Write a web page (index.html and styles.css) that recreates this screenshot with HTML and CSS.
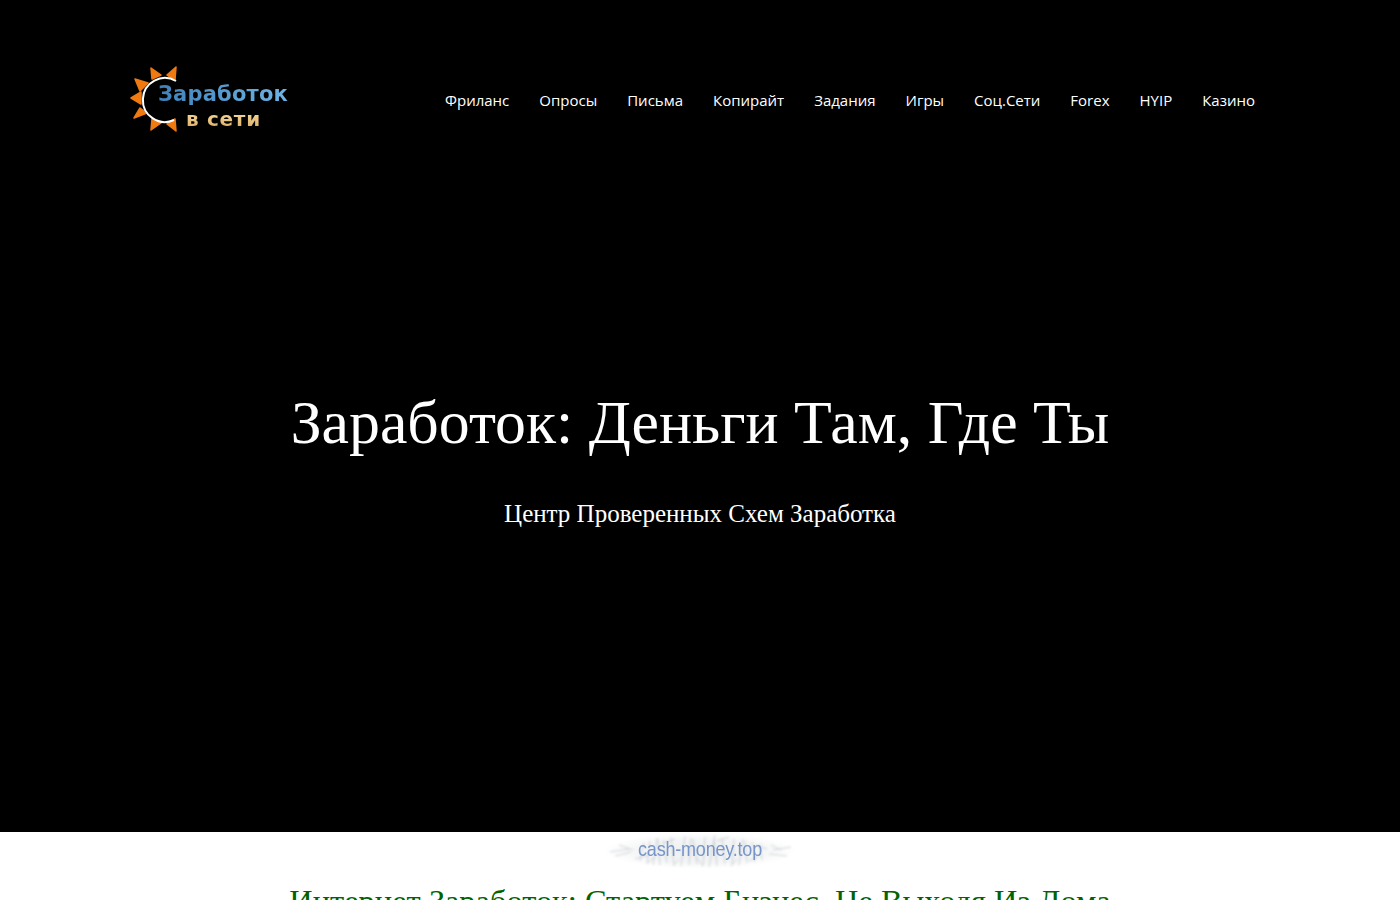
FILE: index.html
```html
<!DOCTYPE html>
<html lang="ru">
<head>
<meta charset="utf-8">
<title>Заработок в сети</title>
<link rel="stylesheet" href="styles.css">
</head>
<body>
<section class="hero">
  <header class="topbar">
    <a class="logo" href="#">
      <svg class="sun" width="50" height="70" viewBox="0 0 50 70" aria-hidden="true">
        <g fill="#f07a10" stroke="#f07a10" stroke-width="1.5" stroke-linejoin="round">
          <polygon points="21,3 31,10 22,14"/>
          <polygon points="46,2 45,15 37,10"/>
          <polygon points="5,14 18,18 10,26"/>
          <polygon points="1,33 11,27 11,39"/>
          <polygon points="4,53 10,43 17,48"/>
          <polygon points="21,65 22,54 31,58"/>
          <polygon points="46,66 37,59 45,54"/>
        </g>
        <path d="M46 16 A22 22 0 1 0 44 55" fill="none" stroke="#fff" stroke-width="2"/>
      </svg>
      <span class="logo-text">
        <span class="logo-top">Заработок</span>
        <span class="logo-bottom">в сети</span>
      </span>
    </a>
    <nav class="menu">
      <a href="#">Фриланс</a>
      <a href="#">Опросы</a>
      <a href="#">Письма</a>
      <a href="#">Копирайт</a>
      <a href="#">Задания</a>
      <a href="#">Игры</a>
      <a href="#">Соц.Сети</a>
      <a href="#">Forex</a>
      <a href="#">HYIP</a>
      <a href="#">Казино</a>
    </nav>
  </header>
  <div class="hero-copy">
    <h1>Заработок: Деньги Там, Где Ты</h1>
    <p>Центр Проверенных Схем Заработка</p>
  </div>
</section>
<main class="content">
  <div class="stamp">
    <svg class="frost" width="190" height="36" viewBox="0 0 190 36" aria-hidden="true">
      <g fill="none" stroke="#aeb6bc" stroke-width="1">
        <path d="M5 19 L24 16 M10 23 L26 19 M14 12 L28 17 M168 17 L186 14 M164 21 L182 23 M166 12 L176 17"/>
        <path d="M35 28 L39 10 M42 31 L45 8 M48 32 L52 5 M55 32 L53 6 M62 30 L58 7 M69 32 L66 4 M76 33 L80 3 M84 32 L86 5 M92 31 L88 6 M98 33 L100 4 M104 34 L110 2 M112 33 L109 6 M120 31 L117 5 M127 32 L129 6 M134 32 L138 6 M142 30 L140 8 M150 29 L147 9 M157 27 L155 11"/>
        <path d="M42 30 L50 24 M68 33 L74 26 M98 33 L92 25 M126 33 L132 26 M144 28 L154 23 M30 26 L44 22 M150 12 L162 16 M58 10 L70 6 M112 8 L124 4"/>
      </g>
    </svg>
    <span class="stamp-text">cash-money.top</span>
  </div>
  <h2>Интернет Заработок: Стартуем Бизнес, Не Выходя Из Дома</h2>
</main>
</body>
</html>
```
FILE: styles.css
```css
* { box-sizing: border-box; }
html, body { margin: 0; padding: 0; }
body { background: #fff; font-family: "Open Sans", sans-serif; height: 900px; overflow: hidden; }
a { text-decoration: none; color: inherit; }

.hero { height: 832px; background: #000; color: #fff; display: flex; flex-direction: column; }
.topbar { width: 1140px; margin: 0 auto; padding-top: 65px; display: flex; justify-content: space-between; align-items: center; height: 135px; }

.logo { display: flex; align-items: center; width: 160px; height: 70px; }
.sun { flex: none; }
.logo-text { display: flex; flex-direction: column; margin: 13px 0 0 -22px; font-family: "DejaVu Sans", sans-serif; font-weight: 700; }
.logo-top { font-size: 21px; line-height: 26px; letter-spacing: .2px; white-space: nowrap;
  background: linear-gradient(90deg, #3f80b8, #6fb4e6); -webkit-background-clip: text; background-clip: text; color: transparent; }
.logo-bottom { font-size: 20px; line-height: 25px; margin-left: 28px; letter-spacing: .7px; white-space: nowrap;
  background: linear-gradient(180deg, #fbe7ae, #d9a45a); -webkit-background-clip: text; background-clip: text; color: transparent; }

.menu { display: flex; }
.menu a { padding: 0 15px; font-size: 15px; line-height: 20px; color: #fff; white-space: nowrap; }

.hero-copy { text-align: center; padding-top: 247px; font-family: "Liberation Serif", serif; }
.hero-copy h1 { margin: 0; font-size: 61.8px; line-height: 80px; font-weight: 400; }
.hero-copy p { margin: 36px 0 0; font-size: 25px; line-height: 32px; }

.content { text-align: center; }
.stamp { width: 190px; height: 36px; margin: 1px auto 0; position: relative; display: flex; align-items: center; justify-content: center;
  background: radial-gradient(closest-side, #eceef0 0%, #f4f5f6 65%, #fff 100%); }
.frost { position: absolute; left: 0; top: 0; filter: blur(.8px); opacity: .55; }
.stamp-text { position: relative; top: -2px; font-family: "Liberation Sans", sans-serif; font-size: 18px; color: #7695c8; letter-spacing: -.2px; transform: scaleY(1.15); filter: blur(.5px); }
.content h2 { margin: 12px 0 0; font-family: "Liberation Serif", serif; font-size: 32.4px; line-height: 40px; font-weight: 400; color: #006400; white-space: nowrap; }
```
